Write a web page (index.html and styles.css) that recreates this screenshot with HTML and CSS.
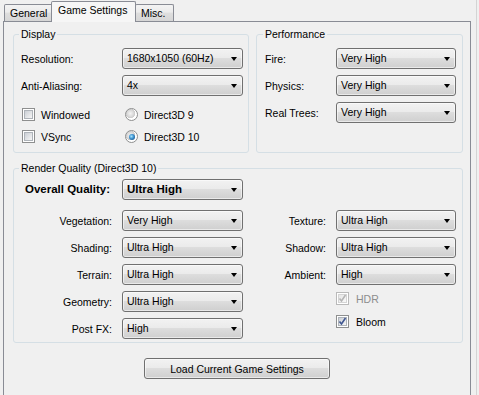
FILE: index.html
```html
<!DOCTYPE html>
<html>

<head>
    <meta charset="utf-8">
    <title>Game Settings</title>
    <link rel="stylesheet" href="styles.css">
</head>

<body>
    <div class="window">
        <div class="tabs">
            <div class="tab tab-general">General</div>
            <div class="tab tab-active">Game Settings</div>
            <div class="tab tab-misc">Misc.</div>
        </div>

        <div class="panel">
            <div class="top-groups">
                <fieldset class="group group-display">
                    <legend>Display</legend>
                    <div class="form-grid display-grid">
                        <label>Resolution:</label>
                        <div class="combo">1680x1050 (60Hz)</div>
                        <label>Anti-Aliasing:</label>
                        <div class="combo">4x</div>
                    </div>
                    <div class="options">
                        <div class="option"><span class="check"></span>Windowed</div>
                        <div class="option option-radio"><span class="radio"></span>Direct3D 9</div>
                        <div class="option"><span class="check"></span>VSync</div>
                        <div class="option option-radio"><span class="radio radio-on"></span>Direct3D 10</div>
                    </div>
                </fieldset>

                <fieldset class="group group-performance">
                    <legend>Performance</legend>
                    <div class="form-grid perf-grid">
                        <label>Fire:</label>
                        <div class="combo">Very High</div>
                        <label>Physics:</label>
                        <div class="combo">Very High</div>
                        <label>Real Trees:</label>
                        <div class="combo">Very High</div>
                    </div>
                </fieldset>
            </div>

            <fieldset class="group group-render">
                <legend>Render Quality (Direct3D 10)</legend>
                <div class="render-grid">
                    <label class="label-right overall">Overall Quality:</label>
                    <div class="combo combo-bold overall-combo">Ultra High</div>

                    <label class="label-right">Vegetation:</label>
                    <div class="combo">Very High</div>
                    <label class="label-right">Texture:</label>
                    <div class="combo">Ultra High</div>

                    <label class="label-right">Shading:</label>
                    <div class="combo">Ultra High</div>
                    <label class="label-right">Shadow:</label>
                    <div class="combo">Ultra High</div>

                    <label class="label-right">Terrain:</label>
                    <div class="combo">Ultra High</div>
                    <label class="label-right">Ambient:</label>
                    <div class="combo">High</div>

                    <label class="label-right">Geometry:</label>
                    <div class="combo">Ultra High</div>
                    <div class="effects">
                        <div class="option option-disabled">
                            <span class="check check-disabled">
                                <svg width="9" height="9" viewBox="0 0 9 9"><path d="M1.5 4.5 L3.5 7 L7.5 1" fill="none" stroke="#b4b4b4" stroke-width="1.6"/></svg>
                            </span>HDR
                        </div>
                        <div class="option">
                            <span class="check">
                                <svg width="9" height="9" viewBox="0 0 9 9"><path d="M1.5 4.5 L3.5 7 L7.5 1" fill="none" stroke="#3e5590" stroke-width="1.6"/></svg>
                            </span>Bloom
                        </div>
                    </div>

                    <label class="label-right">Post FX:</label>
                    <div class="combo">High</div>
                </div>
            </fieldset>

            <button class="load-button">Load Current Game Settings</button>
        </div>
    </div>
</body>
</html>
```

FILE: styles.css
```css
body {
    margin: 0;
    background: #f0f0f0;
    font-family: "Liberation Sans", Arial, sans-serif;
    font-size: 10.5px;
    color: #000;
    overflow: hidden;
}

.window {
    width: 476px;
    height: 395px;
    border-right: 1px solid #d4d4d4;
    overflow: hidden;
}

/* tab strip */
.tabs {
    display: flex;
    align-items: flex-end;
    height: 22px;
    padding-left: 4px;
    position: relative;
    z-index: 1;
}

.tab {
    box-sizing: border-box;
    height: 17px;
    margin-bottom: 1px;
    padding-left: 5px;
    line-height: 16px;
    border: 1px solid #898c95;
    border-bottom: 0;
    border-radius: 2px 2px 0 0;
    background: linear-gradient(#f3f3f3, #ebebeb 45%, #dedede 50%, #d6d6d6);
}

.tab-general {
    width: 49px;
}

.tab-active {
    width: 85px;
    height: 21px;
    margin: 0 0 0 -2px;
    padding-left: 6px;
    line-height: 17px;
    background: #f6f6f6;
    position: relative;
    z-index: 2;
}

.tab-misc {
    width: 39px;
    margin-left: -1px;
}

.panel {
    box-sizing: border-box;
    width: 468px;
    height: 390px;
    margin: -1px 0 0 3px;
    padding: 6px 6px 0 9px;
    border: 1px solid #898c95;
    background: #f0f0f0;
}

/* group boxes */
.group {
    box-sizing: border-box;
    margin: 0;
    min-width: 0;
    border: 1px solid #d5dfe5;
    border-radius: 3px;
}

.group legend {
    padding: 0 2px;
    margin-left: -2px;
    line-height: 13px;
}

.top-groups {
    display: flex;
    gap: 7px;
}

.group-display {
    width: 236px;
    padding: 7px 0 9px 7px;
}

.group-performance {
    width: 207px;
    padding: 7px 0 0 8px;
}

.group-render {
    width: 450px;
    margin-top: 9px;
    padding: 4px 0 3px 7px;
}

.form-grid {
    display: grid;
    row-gap: 6px;
    align-items: center;
}

.display-grid {
    grid-template-columns: 101px 121px;
}

.perf-grid {
    grid-template-columns: 71px 120px;
}

/* combo boxes */
.combo {
    box-sizing: border-box;
    height: 21px;
    padding-left: 4px;
    line-height: 19px;
    white-space: nowrap;
    border: 1px solid #707070;
    border-radius: 3px;
    background: linear-gradient(#f2f2f2, #ebebeb 45%, #dddddd 50%, #cfcfcf);
    box-shadow: inset 0 0 0 1px rgba(255, 255, 255, 0.55);
    position: relative;
}

.combo::after {
    content: "";
    position: absolute;
    right: 5px;
    top: 8px;
    border-left: 3.5px solid transparent;
    border-right: 3.5px solid transparent;
    border-top: 4px solid #000;
}

.combo-bold {
    font-weight: bold;
    font-size: 11.5px;
}

/* checkboxes and radios */
.options {
    display: grid;
    grid-template-columns: 103px auto;
    row-gap: 9px;
    margin-top: 12px;
}

.option {
    display: flex;
    align-items: center;
    height: 13px;
    padding-left: 1px;
}

.check {
    box-sizing: border-box;
    width: 13px;
    height: 13px;
    margin-right: 6px;
    border: 1px solid #8e8f8f;
    background: #fff;
    position: relative;
    flex: none;
}

.check::before {
    content: "";
    position: absolute;
    left: 1px;
    top: 1px;
    width: 9px;
    height: 9px;
    box-sizing: border-box;
    border: 1px solid #aeb3b9;
    background: linear-gradient(135deg, #cbcfd5, #f6f6f6);
}

.check svg {
    position: absolute;
    left: 1px;
    top: 1px;
    z-index: 1;
}

.check-disabled {
    border-color: #b9b9b9;
}

.check-disabled::before {
    border-color: #d4d4d4;
    background: linear-gradient(135deg, #e6e6e6, #f8f8f8);
}

.option-disabled {
    color: #8d8d8d;
}

.radio {
    box-sizing: border-box;
    width: 13px;
    height: 13px;
    margin-right: 6px;
    border: 1px solid #8e8f8f;
    border-radius: 50%;
    background: radial-gradient(circle at 40% 40%, #f4f4f4 0, #e0e0e0 2.5px, #cccccc 4.5px, #ffffff 5px);
    position: relative;
    flex: none;
}

.radio-on::after {
    content: "";
    position: absolute;
    left: 2.5px;
    top: 2.5px;
    width: 6px;
    height: 6px;
    border-radius: 50%;
    background: radial-gradient(circle at 40% 40%, #a6e6ff 0, #3b8fcc 45%, #123f6e 100%);
}

/* render quality grid */
.render-grid {
    display: grid;
    grid-template-columns: 91px 121px 73px 120px;
    grid-template-rows: 25px 21px 21px 21px 21px 21px;
    column-gap: 10px;
    row-gap: 6px;
    align-items: center;
}

.label-right {
    text-align: right;
}

.overall {
    align-self: start;
    line-height: 21px;
    font-weight: bold;
    font-size: 11.5px;
    margin-right: 2px;
}

.overall-combo {
    grid-column: 2 / 5;
    align-self: start;
    width: 121px;
}

.render-grid label:nth-of-type(2) {
    grid-column: 1;
}

.effects {
    grid-column: 3 / 5;
    grid-row: 5 / 7;
    align-self: start;
    display: flex;
    flex-direction: column;
    gap: 10px;
    padding: 1px 0 0 83px;
}

.effects .check {
    margin-right: 7px;
}

.effects .option {
    padding-left: 0;
}

.load-button {
    display: block;
    box-sizing: border-box;
    width: 186px;
    height: 21px;
    margin: 15px 0 0 131px;
    padding: 0;
    font: inherit;
    color: #000;
    border: 1px solid #707070;
    border-radius: 3px;
    background: linear-gradient(#f2f2f2, #ebebeb 45%, #dddddd 50%, #cfcfcf);
    box-shadow: inset 0 0 0 1px rgba(255, 255, 255, 0.55);
}
```
